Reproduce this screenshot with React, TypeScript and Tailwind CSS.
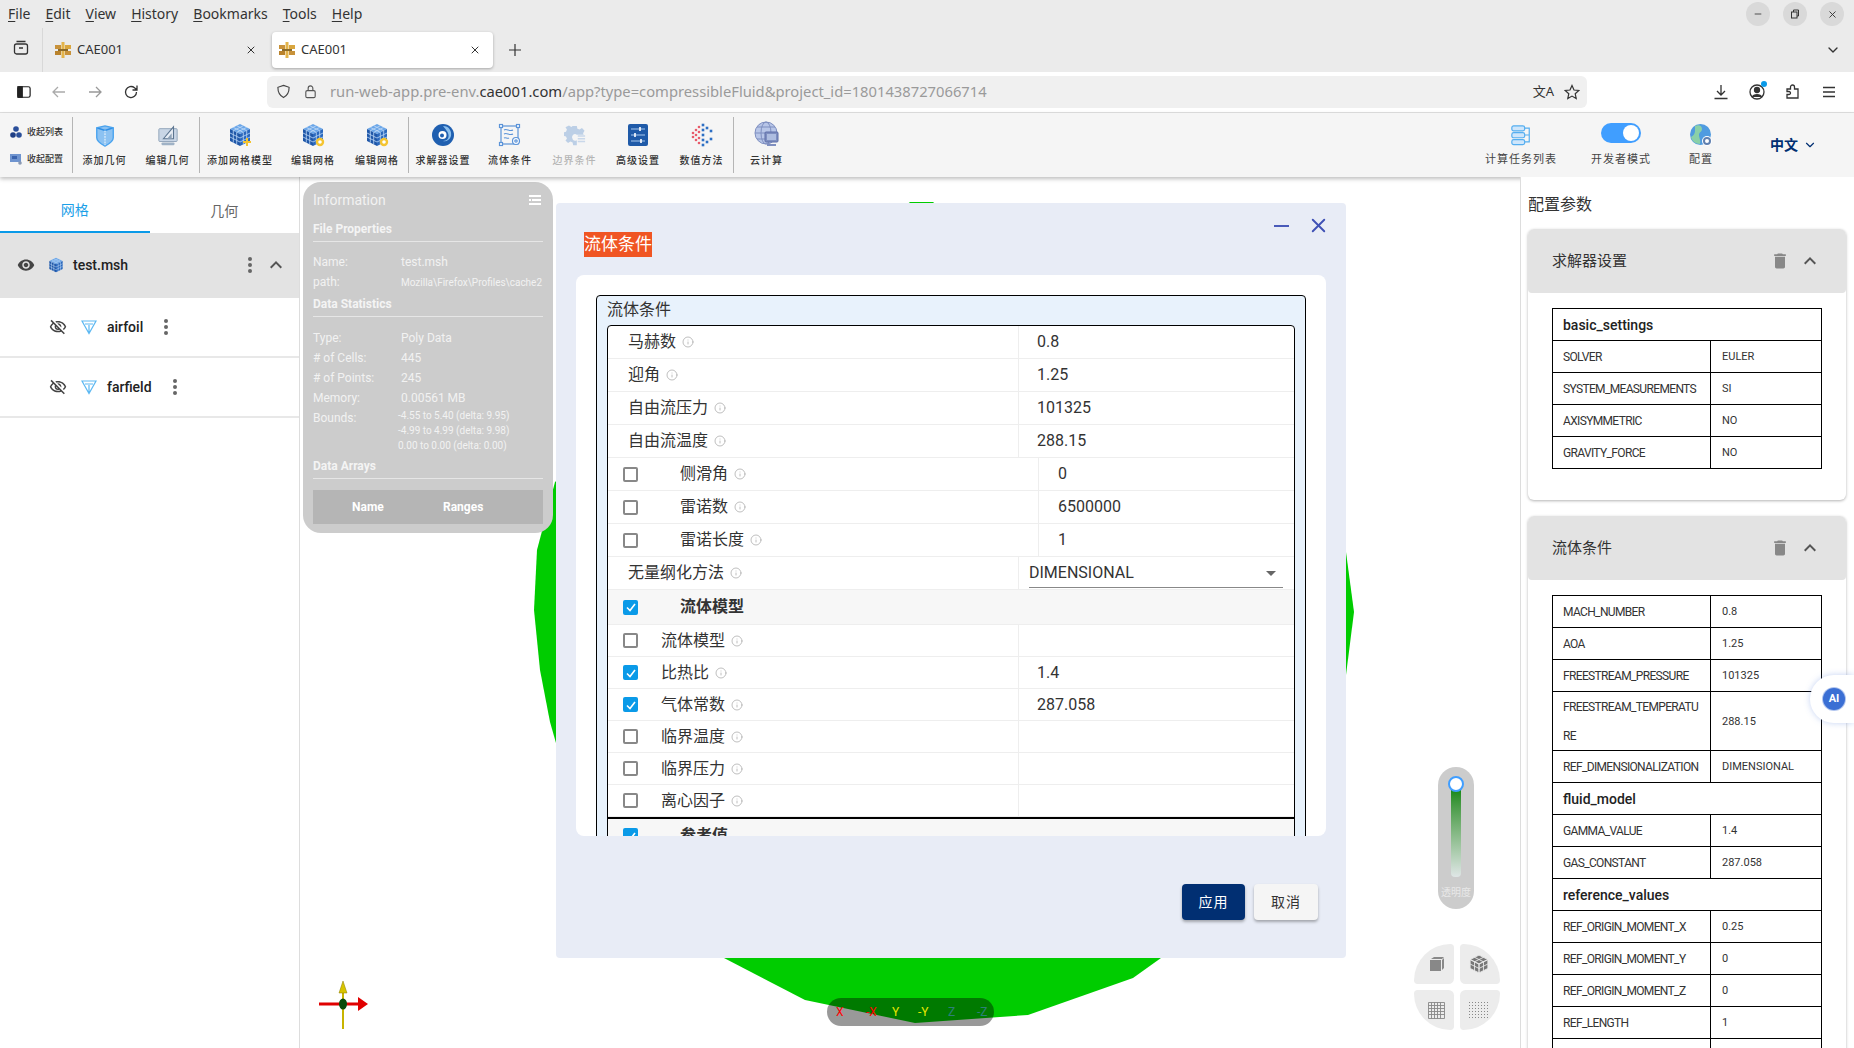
import { ChevronDown, Info, X, Minus } from "lucide-react";
import type { ReactNode } from "react";

const BROWSER_FONT = "[font-family:'Noto_Sans','Noto_Sans_CJK_SC',sans-serif]";

const Logo = () => (
  <svg viewBox="0 0 16 16" className="size-4">
    <rect x="0" y="3" width="6" height="4" fill="#c8923a" />
    <rect x="10" y="3" width="6" height="4" fill="#d9a63f" />
    <rect x="0" y="9" width="6" height="4" fill="#b9822c" />
    <rect x="10" y="9" width="6" height="4" fill="#c8923a" />
    <rect x="6.5" y="0" width="3" height="16" fill="#e3b44b" />
    <rect x="3" y="7" width="10" height="2" fill="#8a6a2a" />
  </svg>
);

const Tab = ({ active }: { active?: boolean }) => (
  <div
    className={`flex h-9 w-[221px] items-center rounded pl-[7px] pr-3 ${
      active ? "bg-white shadow-[0_1px_3px_rgba(0,0,0,0.3)]" : ""
    }`}
  >
    <Logo />
    <span className="ml-[6px] flex-1 text-[13px] text-[#333]">CAE001</span>
    <X size={12} className="text-[#333]" />
  </div>
);

const MeshCube = ({ size = 24, badge }: { size?: number; badge?: "plus" | "gear" }) => (
  <svg viewBox="0 0 24 24" width={size} height={size}>
    <path d="M12 1 22 6 12 11 2 6z" fill="#6ba6e8" />
    <path d="M2 6 12 11V23L2 18z" fill="#1f57a8" />
    <path d="M22 6 12 11V23L22 18z" fill="#2a68bd" />
    <path
      d="M5.3 4.4 15.3 9.4M8.7 2.7 18.7 7.7M18.7 4.4 8.7 9.4M15.3 2.7 5.3 7.7M2 10 12 15 22 10M2 14 12 19 22 14M5.3 7.7V19.7M8.7 9.4V21.4M15.3 9.4V21.4M18.7 7.7V19.7"
      stroke="#bcd8f6"
      strokeWidth="0.8"
      fill="none"
    />
    {badge === "plus" && <path d="M19 15v8M15 19h8" stroke="#f4c430" strokeWidth="2" />}
    {badge === "gear" && <circle cx="19" cy="19" r="3" fill="#fff" stroke="#f4c430" strokeWidth="2.4" />}
  </svg>
);

const AddGeo = () => (
  <svg viewBox="0 0 24 24" width="22" height="22">
    <path d="M3 3 12 1l9 2v11c0 4-5 7-9 9-4-2-9-5-9-9z" fill="#8cc2f2" />
    <path d="M3 3 12 6l9-3" fill="none" stroke="#2f8fe6" strokeWidth="1.5" />
    <path d="M3 3v11c0 4 5 7 9 9 4-2 9-5 9-9V3L12 1z" fill="none" stroke="#4aa3ee" strokeWidth="1.5" />
    <path d="M12 6v16" stroke="#ffffff" strokeWidth="1" strokeDasharray="2 1" />
  </svg>
);

const EditGeo = () => (
  <svg viewBox="0 0 24 24" width="22" height="22">
    <rect x="2" y="4" width="20" height="14" rx="1" fill="#c9d6e6" stroke="#8ea2b8" />
    <path d="M7 15 18 2v13z" fill="#e7edf5" stroke="#5c7590" strokeWidth="1.2" />
    <path d="M11 15 16 9v6z" fill="#8ea2b8" />
    <rect x="5" y="19" width="14" height="3" rx="1" fill="#9fb2c6" />
  </svg>
);

const Swirl = () => (
  <svg viewBox="0 0 24 24" width="24" height="24">
    <circle cx="12" cy="12" r="11" fill="#1f5fb0" />
    <path d="M12 3c6 0 9 5 8 10-1 4-5 6-8 5 4 0 6-3 5.500-6C17 8 14 6 12 3z" fill="#8cc0ee" />
    <circle cx="11.500" cy="12" r="4" fill="#fff" />
    <circle cx="11" cy="12.500" r="2" fill="#1f5fb0" />
  </svg>
);

const FlowCond = () => (
  <svg viewBox="0 0 24 24" width="24" height="24" fill="none" stroke="#5b93d8" strokeWidth="1.2">
    <rect x="3" y="3" width="17" height="18" />
    <rect x="1.500" y="1.500" width="3" height="3" fill="#fff" />
    <rect x="18.500" y="1.500" width="3" height="3" fill="#fff" />
    <rect x="1.500" y="19.500" width="3" height="3" fill="#fff" />
    <path d="M6 7c3-2 5 2 9 0M6 11c3-2 5 2 9 0M6 15c2-1 3 1 5 0" />
    <circle cx="18" cy="18" r="3.500" fill="#fff" />
    <circle cx="18" cy="18" r="1.200" />
  </svg>
);

const BoundaryCond = () => (
  <svg viewBox="0 0 24 24" width="22" height="22">
    <path
      d="M10 1h4l.6 3 2.400 1 2.600-1.600 2.800 2.800L20.800 9l.6 1.500H14a3.500 3.500 0 1 0 0 6v5.500h-4l-.6-3-2.400-1-2.600 1.600-2.800-2.800L3.200 15l-1-2.400L0 12V8l2.200-.6 1-2.400-1.600-2.600L5.400.6 8 2.200 9.400 1z"
      fill="#bccfe6"
    />
    <path d="M15 12h8M15 15h8M15 18h8" stroke="#c9d8ea" strokeWidth="1.500" />
  </svg>
);

const Advanced = () => (
  <svg viewBox="0 0 24 24" width="24" height="24">
    <rect x="2" y="1" width="20" height="22" rx="2" fill="#1f5aa8" />
    <path d="M5 6h14M5 12h14M5 18h14" stroke="#a8c8ee" strokeWidth="1.200" />
    <path d="M14 4v4M9 10v4M15 16v4" stroke="#fff" strokeWidth="1.600" />
  </svg>
);

const Numeric = () => {
  const reds = [[3, 10], [3, 14], [6, 7], [6, 12], [6, 17], [9, 4], [9, 9], [9, 15], [9, 20]];
  const blues = [[13, 2], [13, 7], [13, 12], [13, 17], [13, 22], [17, 5], [17, 19], [21, 8], [21, 16]];
  return (
    <svg viewBox="0 0 24 24" width="24" height="24">
      {reds.map(([x, y]) => (
        <circle key={`${x}-${y}`} cx={x} cy={y} r="1.300" fill="#e85a6a" />
      ))}
      {blues.map(([x, y]) => (
        <rect key={`${x}-${y}`} x={x - 1.3} y={y - 1.3} width="2.600" height="2.600" fill="#2d6fc4" />
      ))}
    </svg>
  );
};

const Cloud = () => (
  <svg viewBox="0 0 26 26" width="26" height="26" fill="none" stroke="#7f8fc0" strokeWidth="1">
    <circle cx="12" cy="12" r="11" fill="#b8c6e8" />
    <ellipse cx="12" cy="12" rx="5" ry="11" />
    <path d="M1 12h22M3 6h18M3 18h18" />
    <rect x="11" y="11" width="13" height="10" rx="1" fill="#7f8fc0" stroke="#5f6fa8" />
    <rect x="13" y="13" width="9" height="6" fill="#aebde0" stroke="none" />
    <path d="M13 24h9" strokeWidth="2" />
  </svg>
);

const TaskList = () => (
  <svg viewBox="0 0 24 24" width="22" height="22" fill="#cfe6fb" stroke="#55aef0" strokeWidth="1.300">
    <rect x="2" y="2" width="14" height="5.500" rx="2" />
    <rect x="2" y="9.500" width="14" height="5.500" rx="2" />
    <rect x="2" y="17" width="14" height="5.500" rx="2" />
    <path d="M16 4.500h5v15h-5M16 12h5" fill="none" />
  </svg>
);

const Globe = () => (
  <svg viewBox="0 0 24 24" width="24" height="24">
    <circle cx="11.500" cy="11.500" r="10.500" fill="#4f9be0" />
    <path d="M6 3c4-2 7 0 7 3s-3 3-3 6 2 5 1 9c-5 0-8-3-9-7 2-1 4-3 4-6z" fill="#8ad0a8" />
    <circle cx="18" cy="18" r="5" fill="#fff" />
    <circle cx="18" cy="18" r="3" fill="none" stroke="#5f7fb0" strokeWidth="2" />
  </svg>
);

const ToolItem = ({
  width,
  label,
  icon,
  muted
}: {
  width: string;
  label: string;
  icon: ReactNode;
  muted?: boolean;
}) => (
  <div className={`flex h-full shrink-0 flex-col items-center ${width}`}>
    <div className="flex h-[34px] items-end justify-center">{icon}</div>
    <span
      className={`mt-[7px] text-[10px] font-medium leading-[14px] tracking-[1px] whitespace-nowrap ${
        muted ? "text-[#b5b5b5]" : "text-[#333]"
      }`}
    >
      {label}
    </span>
  </div>
);

const Sep = () => <div className="h-14 w-px shrink-0 bg-[#b5b5b5]" />;

const Toolbar = () => (
  <div className="relative z-10 flex h-[64px] shrink-0 items-center bg-[#f5f5f5] shadow-[0_2px_4px_rgba(0,0,0,0.25)]">
    <div className="flex w-[72px] shrink-0 flex-col gap-[13px] pl-[10px]">
      <div className="flex items-center gap-[5px]">
        <svg viewBox="0 0 12 12" className="size-3">
          <circle cx="6" cy="3" r="2.800" fill="#2a4f9a" />
          <circle cx="3" cy="9" r="2.800" fill="#1f3f85" />
          <circle cx="9" cy="9" r="2.800" fill="#2a4f9a" />
        </svg>
        <span className="text-[9px] font-medium leading-[14px] text-[#333]">收起列表</span>
      </div>
      <div className="flex items-center gap-[5px]">
        <svg viewBox="0 0 12 12" className="size-3">
          <rect x="0" y="1" width="11" height="8" fill="#6f94cf" />
          <rect x="2" y="3" width="5" height="3" fill="#3a63ad" />
          <circle cx="10" cy="10" r="1.800" fill="#8a99b3" />
        </svg>
        <span className="text-[9px] font-medium leading-[14px] text-[#333]">收起配置</span>
      </div>
    </div>
    <Sep />
    <ToolItem width="w-[63px]" label="添加几何" icon={<AddGeo />} />
    <ToolItem width="w-[63px]" label="编辑几何" icon={<EditGeo />} />
    <Sep />
    <ToolItem width="w-[80px]" label="添加网格模型" icon={<MeshCube badge="plus" />} />
    <ToolItem width="w-[66px]" label="编辑网格" icon={<MeshCube badge="gear" />} />
    <ToolItem width="w-[62px]" label="编辑网格" icon={<MeshCube badge="gear" />} />
    <Sep />
    <ToolItem width="w-[68px]" label="求解器设置" icon={<Swirl />} />
    <ToolItem width="w-[66px]" label="流体条件" icon={<FlowCond />} />
    <ToolItem width="w-[63px]" label="边界条件" icon={<BoundaryCond />} muted />
    <ToolItem width="w-[64px]" label="高级设置" icon={<Advanced />} />
    <ToolItem width="w-[63px]" label="数值方法" icon={<Numeric />} />
    <Sep />
    <ToolItem width="w-[65px]" label="云计算" icon={<Cloud />} />
    <div className="ml-auto flex h-full items-center">
      <div className="flex h-full w-[100px] flex-col items-center pt-[11px]">
        <TaskList />
        <span className="mt-[7px] text-[11px] leading-[14px] tracking-[1px] text-[#444]">计算任务列表</span>
      </div>
      <div className="flex h-full w-[100px] flex-col items-center pt-[10px]">
        <div className="flex h-5 w-10 items-center justify-end rounded-full bg-[#409eff] pr-[2px]">
          <div className="h-4 w-4 rounded-full bg-white" />
        </div>
        <span className="mt-[10px] text-[11px] leading-[14px] tracking-[1px] text-[#444]">开发者模式</span>
      </div>
      <div className="flex h-full w-[60px] flex-col items-center pt-[10px]">
        <Globe />
        <span className="mt-[6px] text-[11px] leading-[14px] tracking-[1px] text-[#444]">配置</span>
      </div>
      <div className="ml-[39px] mr-[37px] flex items-center gap-[5px]">
        <span className="text-sm font-bold text-[#012f72]">中文</span>
        <ChevronDown size={14} className="text-[#012f72]" />
      </div>
    </div>
  </div>
);

const BrowserChrome = () => (
  <div className={`shrink-0 ${BROWSER_FONT}`}>
    <div className="flex h-7 items-center bg-[#ebebeb] pl-2 pr-[10px] text-sm text-[#333]">
      <div className="flex gap-[15px]">
        {["File", "Edit", "View", "History", "Bookmarks", "Tools", "Help"].map((m) => (
          <span key={m}>
            <span className="underline underline-offset-2">{m[0]}</span>
            {m.slice(1)}
          </span>
        ))}
      </div>
      <div className="ml-auto flex gap-[13px]">
        <div className="flex size-6 items-center justify-center rounded-full bg-[#d9d9d9]">
          <Minus size={10} />
        </div>
        <div className="flex size-6 items-center justify-center rounded-full bg-[#d9d9d9]">
          <svg viewBox="0 0 10 10" className="size-[10px]" fill="none" stroke="#333">
            <rect x="1.500" y="3" width="5.500" height="6" />
            <path d="M3.500 3V1h5v6H7" />
          </svg>
        </div>
        <div className="flex size-6 items-center justify-center rounded-full bg-[#d9d9d9]">
          <X size={11} />
        </div>
      </div>
    </div>
    <div className="flex h-11 items-center bg-[#ebebeb]">
      <div className="flex h-full w-[43px] items-center justify-center border-r border-[#d8d8d8] pb-1">
        <svg viewBox="0 0 16 16" className="size-4" fill="none" stroke="#333" strokeWidth="1.300">
          <rect x="1.500" y="4" width="13" height="10" rx="2" />
          <path d="M3.500 1.500h9M6 8h4" />
        </svg>
      </div>
      <div className="ml-[5px] flex gap-[3px]">
        <Tab />
        <Tab active />
      </div>
      <svg viewBox="0 0 14 14" className="ml-[15px] size-[14px]" fill="none" stroke="#333" strokeWidth="1.200">
        <path d="M7 1v12M1 7h12" />
      </svg>
      <ChevronDown size={16} className="ml-auto mr-[13px] text-[#333]" />
    </div>
    <div className="flex h-[41px] items-center border-b border-[#e0e0e0] bg-white pb-[1px]">
      <div className="flex w-[267px] items-center pl-[17px]">
        <svg viewBox="0 0 16 16" className="size-[14px]" fill="none" stroke="#222" strokeWidth="1.400">
          <rect x="1" y="2" width="14" height="12" rx="2" />
          <rect x="1" y="2" width="5" height="12" fill="#222" />
        </svg>
        <svg viewBox="0 0 16 16" className="ml-[20px] size-4" fill="none" stroke="#aaa" strokeWidth="1.300">
          <path d="M14 8H2M7 3 2 8l5 5" />
        </svg>
        <svg viewBox="0 0 16 16" className="ml-[20px] size-4" fill="none" stroke="#999" strokeWidth="1.300">
          <path d="M2 8h12M9 3l5 5-5 5" />
        </svg>
        <svg viewBox="0 0 16 16" className="ml-[20px] size-4" fill="none" stroke="#333" strokeWidth="1.300">
          <path d="M13.500 8a5.500 5.500 0 1 1-2-4.200L14 6M14 1.500V6H9.500" />
        </svg>
      </div>
      <div className="flex h-8 w-[1320px] items-center rounded-md bg-[#f0f0f0] pl-[9px] pr-[7px]">
        <svg viewBox="0 0 16 16" className="size-[15px]" fill="none" stroke="#444" strokeWidth="1.200">
          <path d="M8 1.500 14 3.500c0 5-2 9-6 11-4-2-6-6-6-11z" />
        </svg>
        <svg viewBox="0 0 16 16" className="ml-[12px] size-[15px]" fill="none" stroke="#555" strokeWidth="1.200">
          <rect x="3" y="7" width="10" height="7.500" rx="1.500" />
          <path d="M5.500 7V4.500a2.500 2.500 0 0 1 5 0V7" />
        </svg>
        <span className="ml-[12px] text-[14.750px] text-[#9a9a9a]">
          run-web-app.pre-env.<span className="text-[#333]">cae001.com</span>
          /app?type=compressibleFluid&amp;project_id=1801438727066714
        </span>
        <span className="ml-auto text-[13px] text-[#333]">文A</span>
        <svg viewBox="0 0 16 16" className="ml-[10px] size-4" fill="none" stroke="#333" strokeWidth="1.200">
          <path d="m8 1.500 2 4.500 4.800.5-3.600 3.200 1 4.800L8 12.100l-4.200 2.400 1-4.800L1.200 6.500 6 6z" />
        </svg>
      </div>
      <div className="ml-[126px] flex items-center gap-[20px]">
        <svg viewBox="0 0 16 16" className="size-4" fill="none" stroke="#333" strokeWidth="1.300">
          <path d="M8 1v10M4 7l4 4 4-4M1.500 14.500h13" />
        </svg>
        <div className="relative size-4">
          <svg viewBox="0 0 16 16" className="size-4" fill="none" stroke="#333" strokeWidth="1.300">
            <circle cx="8" cy="8" r="7" />
            <circle cx="8" cy="6" r="2.500" fill="#333" />
            <path d="M3.500 13c1-3 8-3 9 0" fill="#333" />
          </svg>
          <div className="absolute -right-[2px] -top-[3px] size-[6px] rounded-full bg-[#0a9ae8]" />
        </div>
        <svg viewBox="0 0 16 16" className="size-4" fill="none" stroke="#333" strokeWidth="1.300">
          <path d="M2 5h3.500V3a2 2 0 0 1 4 0v2H13v9H2v-3.500h2a1.500 1.500 0 0 0 0-3H2z" />
        </svg>
        <svg viewBox="0 0 16 16" className="size-4" fill="none" stroke="#333" strokeWidth="1.400">
          <path d="M2 3.500h12M2 8h12M2 12.500h12" />
        </svg>
      </div>
    </div>
  </div>
);

const Eye = ({ off }: { off?: boolean }) => (
  <svg viewBox="0 0 24 24" className="size-[18px]" fill="#444">
    <path
      d={
        off
          ? "M12 6c3.790 0 7.170 2.130 8.820 5.500-.59 1.220-1.420 2.270-2.410 3.120l1.410 1.410c1.390-1.230 2.490-2.770 3.180-4.530C21.270 7.110 17 4 12 4c-1.270 0-2.490.2-3.640.57l1.650 1.650C10.660 6.090 11.320 6 12 6zm-1.070 1.140L13 9.210c.57.25 1.030.71 1.280 1.280l2.070 2.070c.08-.34.14-.7.14-1.070C16.500 9.010 14.480 7 12 7c-.37 0-.72.05-1.070.14zM2.010 3.870l2.680 2.680C3.060 7.830 1.770 9.530 1 11.500 2.730 15.890 7 19 12 19c1.520 0 2.980-.29 4.320-.82l3.420 3.420 1.410-1.410L3.420 2.450 2.010 3.870zm7.500 7.500l2.610 2.610c-.04.01-.08.02-.12.02-1.380 0-2.500-1.120-2.500-2.500 0-.05.01-.08.01-.13zm-3.400-3.400l1.750 1.750c-.23.55-.36 1.150-.36 1.780 0 2.480 2.020 4.500 4.500 4.500.63 0 1.230-.13 1.770-.36l.98.98c-.88.24-1.800.38-2.750.38-3.790 0-7.170-2.130-8.820-5.500.7-1.430 1.720-2.610 2.930-3.530z"
          : "M12 4.500C7 4.500 2.730 7.610 1 12c1.730 4.390 6 7.500 11 7.500s9.270-3.110 11-7.500c-1.730-4.390-6-7.500-11-7.500zM12 17c-2.760 0-5-2.240-5-5s2.240-5 5-5 5 2.240 5 5-2.240 5-5 5zm0-8c-1.660 0-3 1.340-3 3s1.340 3 3 3 3-1.340 3-3-1.340-3-3-3z"
      }
    />
  </svg>
);

const ExpandLess = () => (
  <svg viewBox="0 0 24 24" className="size-6" fill="#555">
    <path d="M12 8l-6 6 1.410 1.410L12 10.830l4.590 4.580L18 14z" />
  </svg>
);

const Dots = () => (
  <svg viewBox="0 0 6 18" className="h-[18px] w-[6px]" fill="#666">
    <circle cx="3" cy="3" r="2" />
    <circle cx="3" cy="9" r="2" />
    <circle cx="3" cy="15" r="2" />
  </svg>
);

const Funnel = () => (
  <svg viewBox="0 0 16 16" className="size-4" fill="none" stroke="#5cb8f2" strokeWidth="1.200">
    <path d="M1 2h14L8 14.500zM4 5h8M8 14.500V6" />
  </svg>
);

const GeoRow = ({ name, gap }: { name: string; gap: string }) => (
  <div className="flex h-[60px] items-center border-b-2 border-[#e8e8e8] pl-[49px] text-sm font-medium text-[#222]">
    <Eye off />
    <div className="ml-[14px]">
      <Funnel />
    </div>
    <span className="ml-[10px]">{name}</span>
    <div className={gap}>
      <Dots />
    </div>
  </div>
);

const LeftPanel = () => (
  <div className="flex w-[300px] shrink-0 flex-col border-r border-[#ddd] bg-white">
    <div className="flex h-[56px] shrink-0 text-sm">
      <div className="flex w-[150px] items-center justify-center border-b-2 border-[#0a9ae8] pt-[12px] text-[#1aa0e8]">
        网格
      </div>
      <div className="flex w-[150px] items-center justify-center pt-[12px] text-[#666]">几何</div>
    </div>
    <div className="flex h-[65px] items-center bg-[#e3e3e3] pb-[2px] pl-[17px] text-sm font-medium text-[#222]">
      <Eye />
      <div className="ml-[13px]">
        <MeshCube size={16} />
      </div>
      <span className="ml-[9px]">test.msh</span>
      <div className="ml-[119px]">
        <Dots />
      </div>
      <div className="ml-[11px]">
        <ExpandLess />
      </div>
    </div>
    <GeoRow name="airfoil" gap="ml-[20px]" />
    <GeoRow name="farfield" gap="ml-[20px]" />
  </div>
);

const InfoRow = ({ k, v, small }: { k: string; v: string; small?: boolean }) => (
  <div className="flex h-5 items-center">
    <span className="w-[88px] shrink-0">{k}</span>
    <span className={small ? "text-[10px] whitespace-nowrap" : ""}>{v}</span>
  </div>
);

const InfoHead = ({ text, mt }: { text: string; mt: string }) => (
  <div className={`${mt} border-b border-[#e6e6e6] pb-[4px] text-[12px] font-bold leading-[16px] text-[#f4f4f4]`}>
    {text}
  </div>
);

const InfoPanel = () => (
  <div className="absolute left-[3px] top-[5px] h-[351px] w-[250px] rounded-[18px] bg-[#ccc] px-[10px] pt-[8px] text-[12px] text-[#f2f2f2]">
    <div className="flex items-center justify-between">
      <span className="text-sm leading-[20px]">Information</span>
      <svg viewBox="0 0 12 10" className="mr-[2px] h-[10px] w-3" fill="#fff">
        <path d="M0 0h12v2H0zM3 4h9v2H3zM0 8h12v2H0zM0 4h2v2H0z" />
      </svg>
    </div>
    <InfoHead text="File Properties" mt="mt-[11px]" />
    <div className="mt-[10px]">
      <InfoRow k="Name:" v="test.msh" />
      <InfoRow k="path:" v="Mozilla\Firefox\Profiles\cache2" small />
    </div>
    <InfoHead text="Data Statistics" mt="mt-[4px]" />
    <div className="mt-[11px]">
      <InfoRow k="Type:" v="Poly Data" />
      <InfoRow k="# of Cells:" v="445" />
      <InfoRow k="# of Points:" v="245" />
      <InfoRow k="Memory:" v="0.00561 MB" />
      <div className="flex h-[45px] items-start">
        <span className="w-[85px] shrink-0 pt-[1px]">Bounds:</span>
        <div className="text-[10px] leading-[15px]">
          <div>-4.55 to 5.40 (delta: 9.95)</div>
          <div>-4.99 to 4.99 (delta: 9.98)</div>
          <div>0.00 to 0.00 (delta: 0.00)</div>
        </div>
      </div>
    </div>
    <InfoHead text="Data Arrays" mt="mt-[5px]" />
    <div className="mt-[11px] flex h-[34px] items-center bg-[#b5b5b5] text-[12px] font-bold text-white">
      <span className="w-[102px] pl-[39px]">Name</span>
      <span className="pl-[28px]">Ranges</span>
    </div>
  </div>
);

const InfoDot = () => <Info size={12} className="ml-[6px] shrink-0 text-[#aaa]" strokeWidth={1.5} />;

const Check = ({ on }: { on?: boolean }) =>
  on ? (
    <div className="flex h-[15px] w-[15px] shrink-0 items-center justify-center rounded-[2px] bg-[#0a9ae8]">
      <svg viewBox="0 0 12 12" className="size-3" fill="none" stroke="#fff" strokeWidth="1.600">
        <path d="M2 6.500 5 9.500 10 3" />
      </svg>
    </div>
  ) : (
    <div className="h-[15px] w-[15px] shrink-0 rounded-[2px] border-2 border-[#888]" />
  );

const PlainRow = ({ label, value }: { label: string; value: string }) => (
  <div className="flex h-[33px] border-b border-[#eee]">
    <div className="flex w-[411px] items-center border-r border-[#eee] pl-5">
      {label}
      <InfoDot />
    </div>
    <div className="flex items-center pl-[18px]">{value}</div>
  </div>
);

const OptionalRow = ({ label, value }: { label: string; value: string }) => (
  <div className="flex h-[33px] border-b border-[#eee]">
    <div className="flex w-[431px] items-center border-r border-[#eee] pl-[15px]">
      <Check />
      <span className="ml-[42px]">{label}</span>
      <InfoDot />
    </div>
    <div className="flex items-center pl-[19px]">{value}</div>
  </div>
);

const CheckRow = ({ label, value, on }: { label: string; value?: string; on?: boolean }) => (
  <div className="flex h-8 border-b border-[#eee]">
    <div className="flex w-[411px] items-center border-r border-[#eee] pl-[15px]">
      <Check on={on} />
      <span className="ml-[23px]">{label}</span>
      <InfoDot />
    </div>
    <div className="flex items-center pl-[18px]">{value}</div>
  </div>
);

const GroupRow = ({ label, h, extra }: { label: string; h: string; extra?: string }) => (
  <div className={`flex ${h} items-center bg-[#f7f7f7] pl-[15px] font-bold ${extra ?? ""}`}>
    <Check on />
    <span className="ml-[42px]">{label}</span>
  </div>
);

const Modal = () => (
  <div className="absolute left-[256px] top-[26px] flex h-[755px] w-[790px] flex-col rounded bg-[#e8ecf6]">
    <div className="relative h-[72px] shrink-0">
      <span className="absolute left-[28px] top-[29px] bg-[#f05523] text-[17px] leading-[25px] text-white">
        流体条件
      </span>
      <svg viewBox="0 0 16 2" className="absolute left-[718px] top-[22px] h-[2px] w-[15px]" fill="#3f51b5">
        <rect width="16" height="2" />
      </svg>
      <X size={23} strokeWidth={2} className="absolute left-[751px] top-[11px] text-[#3f51b5]" />
    </div>
    <div className="mx-[20px] h-[561px] shrink-0 overflow-hidden rounded-lg bg-white px-[20px] pt-[20px]">
      <div className="h-[600px] rounded-t border border-black bg-[#e8f2fc] px-[10px] text-base text-[#333]">
        <div className="flex h-[29px] items-center pb-[2px]">流体条件</div>
        <div className="rounded-t border border-black bg-white">
          <PlainRow label="马赫数" value="0.8" />
          <PlainRow label="迎角" value="1.25" />
          <PlainRow label="自由流压力" value="101325" />
          <PlainRow label="自由流温度" value="288.15" />
          <OptionalRow label="侧滑角" value="0" />
          <OptionalRow label="雷诺数" value="6500000" />
          <OptionalRow label="雷诺长度" value="1" />
          <div className="flex h-[33px] border-b border-[#eee]">
            <div className="flex w-[411px] items-center border-r border-[#eee] pl-5">
              无量纲化方法
              <InfoDot />
            </div>
            <div className="ml-[10px] flex h-[31px] w-[254px] items-center justify-between border-b border-[#888] pt-[2px]">
              DIMENSIONAL
              <svg viewBox="0 0 10 5" className="mr-[7px] h-[5px] w-[10px]" fill="#666">
                <path d="M0 0h10L5 5z" />
              </svg>
            </div>
          </div>
          <GroupRow label="流体模型" h="h-[35px] border-b border-[#eee]" />
          <CheckRow label="流体模型" />
          <CheckRow label="比热比" value="1.4" on />
          <CheckRow label="气体常数" value="287.058" on />
          <CheckRow label="临界温度" />
          <CheckRow label="临界压力" />
          <CheckRow label="离心因子" />
          <GroupRow label="参考值" h="h-[35px]" extra="border-t-2 border-black" />
        </div>
      </div>
    </div>
    <div className="flex flex-1 justify-end gap-[9px] pr-[28px] pt-[48px]">
      <button className="h-9 w-[63px] rounded bg-[#012f72] text-sm tracking-[1px] text-white shadow-[0_2px_3px_rgba(0,0,0,0.3)]">
        应用
      </button>
      <button className="h-9 w-[64px] rounded bg-[#f5f5f5] text-sm tracking-[1px] text-[#333] shadow-[0_2px_3px_rgba(0,0,0,0.3)]">
        取消
      </button>
    </div>
  </div>
);

const ViewQuad = () => (
  <div className="absolute left-[1114px] top-[767px] grid w-[86px] grid-cols-2 gap-[6px]">
    <div className="flex h-10 items-center justify-center rounded-tl-[40px] rounded-br-md rounded-tr-sm rounded-bl-sm bg-[#ececec]">
      <svg viewBox="0 0 16 16" className="ml-[6px] size-4" fill="#888">
        <path d="M1 4h11v11H1zM2 3l3-2h10l-2 2zM13 4l2-2v10l-2 2z" />
      </svg>
    </div>
    <div className="flex h-10 items-center justify-center rounded-tr-[40px] rounded-bl-md rounded-tl-sm rounded-br-sm bg-[#ececec]">
      <svg viewBox="0 0 18 18" className="mr-[3px] size-[20px]" fill="#777" stroke="#ececec" strokeWidth="0.800">
        <path d="M9 1l8 4-8 4-8-4zM1 5l8 4v8l-8-4zM17 5l-8 4v8l8-4z" />
        <path d="M5 3l8 4M13 3L5 7M1 9l8 4 8-4M5 7v8M13 7v8" fill="none" />
      </svg>
    </div>
    <div className="flex h-10 items-center justify-center rounded-bl-[40px] rounded-tr-md rounded-tl-sm rounded-br-sm bg-[#ececec]">
      <svg viewBox="0 0 17 17" className="ml-[5px] size-[17px]" fill="none" stroke="#888" strokeWidth="0.900">
        <path d="M.5.5h16v16H.5zM.5 3.500h16M.5 6.500h16M.5 9.500h16M.5 12.500h16M3.500.5v16M6.500.5v16M9.500.5v16M12.500.5v16" />
      </svg>
    </div>
    <div className="flex h-10 items-center justify-center rounded-br-[40px] rounded-tl-md rounded-tr-sm rounded-bl-sm bg-[#ececec]">
      <svg viewBox="0 0 19 19" className="mr-[4px] size-[19px]" fill="none" stroke="#888" strokeWidth="1" strokeDasharray="1 2">
        <path d="M0 1.500h19M0 4.500h19M0 7.500h19M0 10.500h19M0 13.500h19M0 16.500h19" />
      </svg>
    </div>
  </div>
);

const Canvas = () => (
  <div className="relative min-w-0 flex-1 bg-white">
    <svg viewBox="300 177 1220 871" className="absolute inset-0 h-full w-full">
      <polygon
        points="910,202 933,202 1346,552 1354,612 1346,675 1161,958 1133,978 1028,1015 915,1023 805,1000 724,958 556,743 550,722 540,670 534,610 537,550 555,482"
        fill="#00cc00"
      />
      {/* axes gizmo */}
      <path d="M343 992V1029" stroke="#c8b400" strokeWidth="2" />
      <path d="M343 981l-4 12h8z" fill="#d8c400" stroke="#8a7a00" strokeWidth="0.500" />
      <path d="M319 1004H360" stroke="#e00000" strokeWidth="3" />
      <path d="M358 997l10 7-10 7z" fill="#e00000" />
      <ellipse cx="343" cy="1004" rx="4" ry="5.500" fill="#0a4a0a" />
    </svg>
    <InfoPanel />
    <Modal />
    <div className="absolute left-[527px] top-[821px] flex h-7 w-[167px] items-center rounded-[14px] bg-black/40 pl-[9px] text-xs">
      <span className="w-[30px] text-[#ff0000]">X</span>
      <span className="w-[26px] text-[#ff0000]">-X</span>
      <span className="w-[26px] text-[#e6e600]">Y</span>
      <span className="w-[30px] text-[#e6e600]">-Y</span>
      <span className="w-[29px] text-[#2d7f78]">Z</span>
      <span className="text-[#2d7f78]">-Z</span>
    </div>
    <div className="absolute left-[1138px] top-[590px] flex h-[142px] w-9 flex-col items-center rounded-[18px] bg-[#ccc] pt-[9px]">
      <div className="relative z-10 size-4 rounded-full border-2 border-[#409eff] bg-white" />
      <div className="-mt-[2px] h-[87px] w-[10px] rounded-b bg-gradient-to-b from-[#148a14] to-[#dfe6e6]" />
      <span className="mt-[10px] text-[10px] leading-[12px] text-[#e8e8e8]">透明度</span>
    </div>
    <ViewQuad />
  </div>
);

const ParamRow = ({ k, v }: { k: ReactNode; v: string }) => (
  <div className="flex border-b border-black">
    <div className="flex min-h-[31px] w-[158px] shrink-0 items-center overflow-hidden border-r border-black pl-[10px] text-[12px] leading-[29px] tracking-[-0.65px] whitespace-nowrap">
      <span className="translate-y-px">{k}</span>
    </div>
    <div className="flex items-center pl-[11px]">
      <span className="translate-y-px">{v}</span>
    </div>
  </div>
);

const ParamHead = ({ text }: { text: string }) => (
  <div className="flex h-8 items-center border-b border-black pl-[10px] text-sm font-medium text-[#222]">
    {text}
  </div>
);

const CardHeader = ({ title }: { title: string }) => (
  <div className="flex h-16 items-center rounded-t-md rounded-b-sm bg-[#e3e3e3] pl-[24px] pr-[24px] text-[15px] text-[#333]">
    <span className="flex-1">{title}</span>
    <svg viewBox="0 0 24 24" className="size-5" fill="#888">
      <path d="M6 19c0 1.100.9 2 2 2h8c1.100 0 2-.9 2-2V7H6v12zM19 4h-3.500l-1-1h-5l-1 1H5v2h14V4z" />
    </svg>
    <div className="ml-[8px]">
      <ExpandLess />
    </div>
  </div>
);

const RightPanel = () => (
  <div className="relative z-20 flex w-[334px] shrink-0 flex-col overflow-hidden border-l border-[#ddd] bg-white pl-[7px] pr-2 [font-family:Roboto,'Noto_Sans_CJK_SC',sans-serif]">
    <div className="flex h-[52px] shrink-0 items-center pt-[4px] text-base text-[#333]">配置参数</div>
    <div className="h-[271px] shrink-0 rounded-md bg-white shadow-[0_1px_3px_rgba(0,0,0,0.3)]">
      <CardHeader title="求解器设置" />
      <div className="mx-[24px] mt-[15px] border-x border-t border-black text-[11px] text-[#333]">
        <ParamHead text="basic_settings" />
        <ParamRow k="SOLVER" v="EULER" />
        <ParamRow k="SYSTEM_MEASUREMENTS" v="SI" />
        <ParamRow k="AXISYMMETRIC" v="NO" />
        <ParamRow k="GRAVITY_FORCE" v="NO" />
      </div>
    </div>
    <div className="mt-4 shrink-0 rounded-md bg-white shadow-[0_1px_3px_rgba(0,0,0,0.3)]">
      <CardHeader title="流体条件" />
      <div className="mx-[24px] mt-[15px] border-x border-t border-black text-[11px] text-[#333]">
        <ParamRow k="MACH_NUMBER" v="0.8" />
        <ParamRow k="AOA" v="1.25" />
        <ParamRow k="FREESTREAM_PRESSURE" v="101325" />
        <ParamRow
          k={
            <>
              FREESTREAM_TEMPERATU
              <br />
              RE
            </>
          }
          v="288.15"
        />
        <ParamRow k="REF_DIMENSIONALIZATION" v="DIMENSIONAL" />
        <ParamHead text="fluid_model" />
        <ParamRow k="GAMMA_VALUE" v="1.4" />
        <ParamRow k="GAS_CONSTANT" v="287.058" />
        <ParamHead text="reference_values" />
        <ParamRow k="REF_ORIGIN_MOMENT_X" v="0.25" />
        <ParamRow k="REF_ORIGIN_MOMENT_Y" v="0" />
        <ParamRow k="REF_ORIGIN_MOMENT_Z" v="0" />
        <ParamRow k="REF_LENGTH" v="1" />
        <ParamRow k="" v="" />
      </div>
    </div>
  </div>
);

const App = () => (
  <div className="relative flex h-screen w-full flex-col overflow-hidden bg-white">
    <BrowserChrome />
    <div className="flex min-h-0 flex-1 flex-col [font-family:Roboto,'Noto_Sans_CJK_SC',sans-serif]">
      <Toolbar />
      <div className="flex min-h-0 flex-1">
        <LeftPanel />
        <Canvas />
        <RightPanel />
      </div>
    </div>
    <div className="absolute right-0 top-[675px] z-30 flex h-12 w-11 items-center rounded-l-3xl bg-white pl-[13px] shadow-[0_0_6px_rgba(90,130,220,0.35)]">
      <div className="flex size-[22px] items-center justify-center rounded-full bg-[#3b6fd4] text-[11px] font-bold text-white shadow-[0_0_0_1px_rgba(59,111,212,0.4)] [font-family:Roboto,sans-serif]">
        AI
      </div>
    </div>
  </div>
);

export default App;
